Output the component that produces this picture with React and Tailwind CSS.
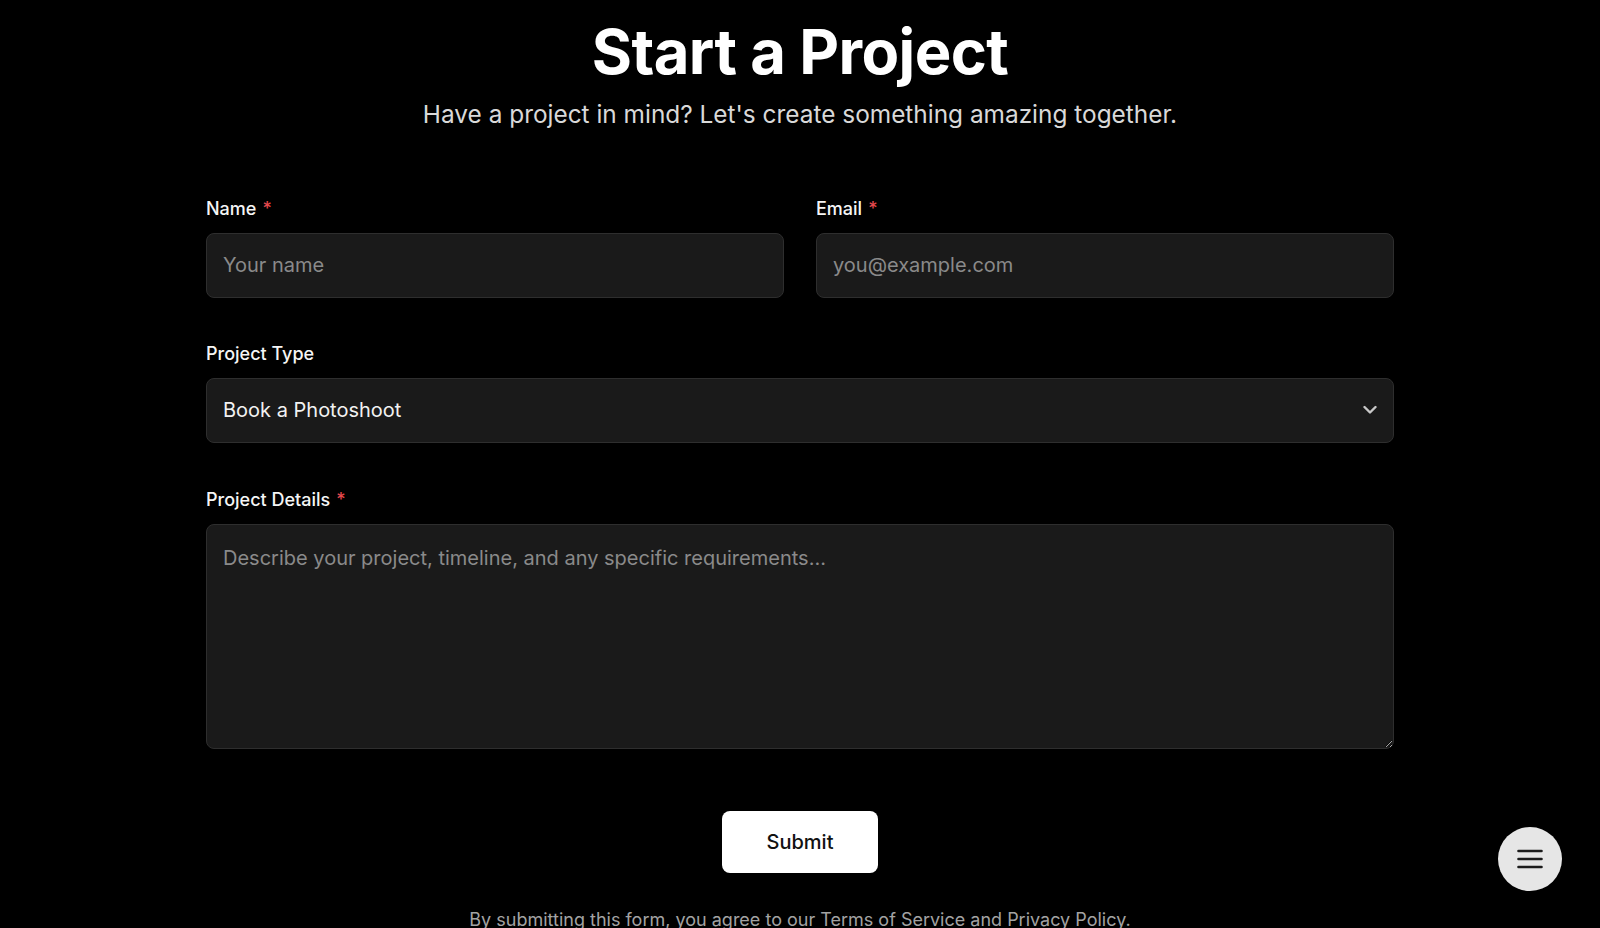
import { useState } from 'react'

const inputBase =
  'w-full rounded-lg border border-[#2e2e2e] bg-[#1a1a1a] px-4 text-xl text-[#f2f2f2] placeholder:text-[#8a8a8a] outline-none focus:border-[#555]'

function Label({ children, required }) {
  return (
    <label className="mb-[10px] block text-lg leading-7 font-medium text-[#f5f5f5]">
      {children}
      {required && <span className="ml-[6px] text-[#e5484d]">*</span>}
    </label>
  )
}

export default function App() {
  const [type, setType] = useState('photoshoot')

  return (
    <div className="relative h-[928px] overflow-hidden bg-black font-['Inter','Liberation_Sans',sans-serif] text-white">
      <div className="mx-auto w-[1188px] pt-[21px]">
        {/* Heading */}
        <h1 className="text-center text-[61.5px] leading-none font-bold tracking-[-0.01em] text-white">
          Start a Project
        </h1>
        <p className="mt-[15px] text-center text-[24.4px] leading-8 text-[#d9d9d9]">
          Have a project in mind? Let's create something amazing together.
        </p>

        {/* Form */}
        <form className="mt-[65px]" onSubmit={(e) => e.preventDefault()}>
          <div className="grid grid-cols-2 gap-8">
            <div>
              <Label required>Name</Label>
              <input type="text" placeholder="Your name" className={`${inputBase} h-[65px]`} />
            </div>
            <div>
              <Label required>Email</Label>
              <input type="email" placeholder="you@example.com" className={`${inputBase} h-[65px]`} />
            </div>
          </div>

          <div className="mt-[42px]">
            <Label>Project Type</Label>
            <div className="relative">
              <select
                value={type}
                onChange={(e) => setType(e.target.value)}
                className={`${inputBase} h-[65px] appearance-none`}
              >
                <option value="photoshoot">Book a Photoshoot</option>
                <option value="video">Video Production</option>
                <option value="other">Other</option>
              </select>
              <svg
                className="pointer-events-none absolute top-1/2 right-[17px] -translate-y-1/2"
                width="14"
                height="9"
                viewBox="0 0 14 9"
                fill="none"
              >
                <path d="M1.5 1.5 7 7l5.5-5.5" stroke="#c8c8c8" strokeWidth="2.4" strokeLinecap="round" strokeLinejoin="round" />
              </svg>
            </div>
          </div>

          <div className="mt-[43px]">
            <Label required>Project Details</Label>
            <textarea
              placeholder="Describe your project, timeline, and any specific requirements..."
              className={`${inputBase} block h-[225px] resize-y pt-[19px] pb-4 leading-7`}
            />
          </div>

          <div className="mt-[62px] flex justify-center">
            <button
              type="submit"
              className="h-[62px] rounded-lg bg-white px-[45px] text-xl font-medium text-[#111]"
            >
              Submit
            </button>
          </div>

          <p className="mt-[35px] text-center text-lg leading-6 text-[#a3a3a3]">
            By submitting this form, you agree to our{' '}
            <a href="#" className="underline underline-offset-2">Terms of Service</a> and{' '}
            <a href="#" className="underline underline-offset-2">Privacy Policy</a>.
          </p>
        </form>
      </div>

      {/* Floating menu */}
      <button className="absolute right-[38px] bottom-[37px] flex h-16 w-16 items-center justify-center rounded-full bg-[#e6e6e6]">
        <svg width="26" height="20" viewBox="0 0 26 20" fill="none">
          <path d="M1.5 2h23M1.5 10h23M1.5 18h23" stroke="#1c1c1c" strokeWidth="2.6" strokeLinecap="round" />
        </svg>
      </button>
    </div>
  )
}
